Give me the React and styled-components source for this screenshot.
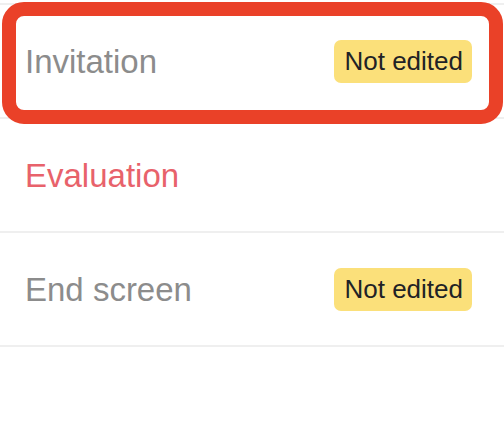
import React from 'react';
import styled, { createGlobalStyle } from 'styled-components';

const GlobalStyle = createGlobalStyle`
  html, body {
    margin: 0;
    padding: 0;
    background: #ffffff;
    font-family: "Liberation Sans", Arial, sans-serif;
  }
`;

const List = styled.div`
  position: relative;
  width: 504px;
  padding-top: 3px;
`;

const Row = styled.div`
  display: flex;
  align-items: center;
  justify-content: space-between;
  height: 112px;
  padding: 0 32px 0 25px;
  border-bottom: 2px solid #efefef;
  &:first-child {
    border-top: 2px solid #efefef;
  }
`;

const Label = styled.span`
  font-size: 33px;
  color: ${(p) => (p.$error ? '#e8626b' : '#8c8c8c')};
  padding-top: 2px;
`;

const Badge = styled.span`
  display: inline-flex;
  align-items: center;
  height: 43px;
  padding: 0 9px 0 10px;
  border-radius: 7px;
  background: #fbe07a;
  color: #1f2326;
  font-size: 26px;
`;

const Highlight = styled.div`
  position: absolute;
  top: 2px;
  left: 2px;
  width: 501px;
  height: 122px;
  box-sizing: border-box;
  border: 14px solid #ea4128;
  border-radius: 22px;
  pointer-events: none;
`;

const steps = [
  { id: 'invitation', label: 'Invitation', edited: false },
  { id: 'evaluation', label: 'Evaluation', edited: true, error: true },
  { id: 'end', label: 'End screen', edited: false },
];

const App = () => {
  return (
    <>
      <GlobalStyle />
      <List>
        {steps.map((step) => (
          <Row key={step.id}>
            <Label $error={step.error}>{step.label}</Label>
            {!step.edited && <Badge>Not edited</Badge>}
          </Row>
        ))}
        <Highlight />
      </List>
    </>
  );
};

export default App;
